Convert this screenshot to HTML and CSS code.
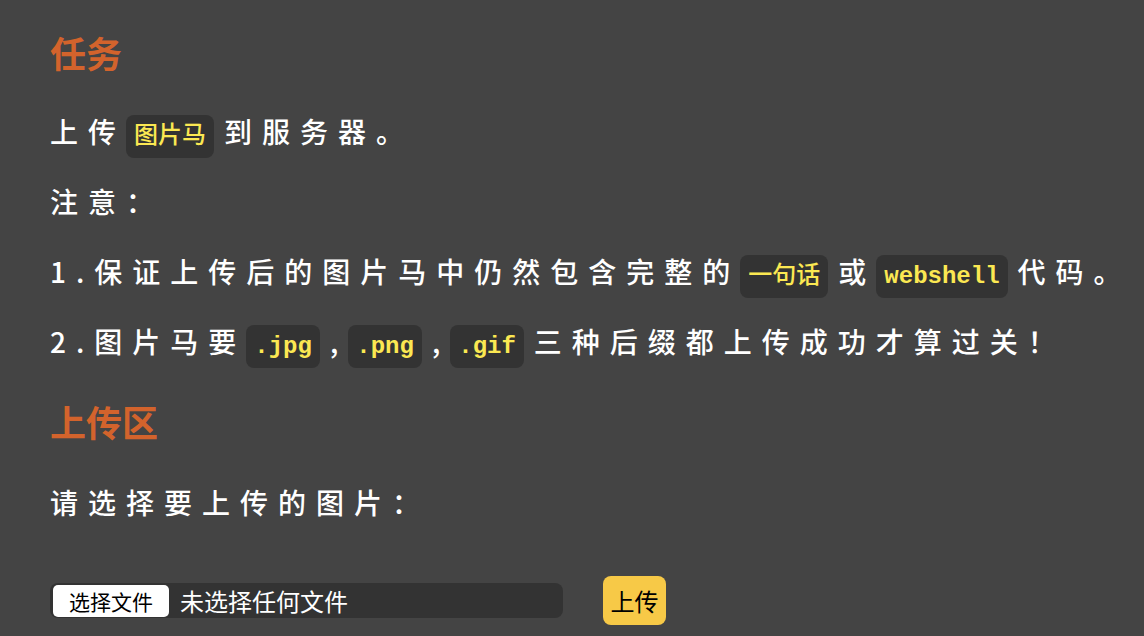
FILE: index.html
```html
<!DOCTYPE html>
<html lang="zh-CN">
<head>
<meta charset="utf-8">
<title>upload</title>
<link rel="stylesheet" href="styles.css">
</head>
<body>
<div class="page">
  <h2 class="title">任务</h2>
  <p class="line">上传<code class="cjk">图片马</code>到服务器。</p>
  <p class="line">注意：</p>
  <p class="line">1.保证上传后的图片马中仍然包含完整的<code class="cjk">一句话</code>或<code>webshell</code>代码。</p>
  <p class="line">2.图片马要<code>.jpg</code>,<code>.png</code>,<code>.gif</code>三种后缀都上传成功才算过关！</p>
  <h2 class="title title-upload">上传区</h2>
  <p class="line">请选择要上传的图片：</p>
  <form class="upload-row">
    <label class="file"><span class="file-btn">选择文件</span><span class="file-name">未选择任何文件</span></label>
    <button class="submit" type="button">上传</button>
  </form>
</div>
</body>
</html>
```

FILE: styles.css
```css
html, body {
  margin: 0;
  background: #444444;
}
body {
  font-family: "Noto Sans CJK SC", "Noto Sans", sans-serif;
  color: #ffffff;
}
.page {
  padding: 0 0 0 50px;
}
.title {
  margin: 32px 0 24px;
  font-size: 36px;
  line-height: 40px;
  font-weight: 700;
  color: #d3632c;
}
.title-upload {
  margin: 25px 0 26px;
}
.line {
  margin: 0;
  font-size: 28px;
  font-weight: 500;
  line-height: 70px;
  letter-spacing: 10px;
  white-space: nowrap;
}
code {
  font-family: "Liberation Mono", "Noto Sans CJK SC", monospace;
  font-weight: 700;
  font-size: 24px;
  line-height: 1;
  letter-spacing: 0;
  color: #fbe852;
  background: #333333;
  border-radius: 8px;
  padding: 8px;
  margin-right: 10px;
}
.cjk {
  font-weight: 500;
}
.upload-row {
  display: flex;
  align-items: center;
  gap: 40px;
  margin-top: 39px;
}
.file {
  display: flex;
  align-items: center;
  box-sizing: border-box;
  width: 513px;
  height: 35px;
  padding-left: 3px;
  background: #333333;
  border-radius: 8px;
}
.file-btn {
  height: 32px;
  line-height: 32px;
  padding: 0 16px;
  background: #ffffff;
  color: #000000;
  font-size: 21px;
  border-radius: 5px;
}
.file-name {
  margin-left: 11px;
  font-size: 24px;
  color: #ffffff;
}
.submit {
  width: 63px;
  height: 49px;
  padding: 0;
  border: none;
  border-radius: 8px;
  background: #f7c947;
  color: #000000;
  font-family: "Noto Sans CJK SC", sans-serif;
  font-size: 24px;
}
```
